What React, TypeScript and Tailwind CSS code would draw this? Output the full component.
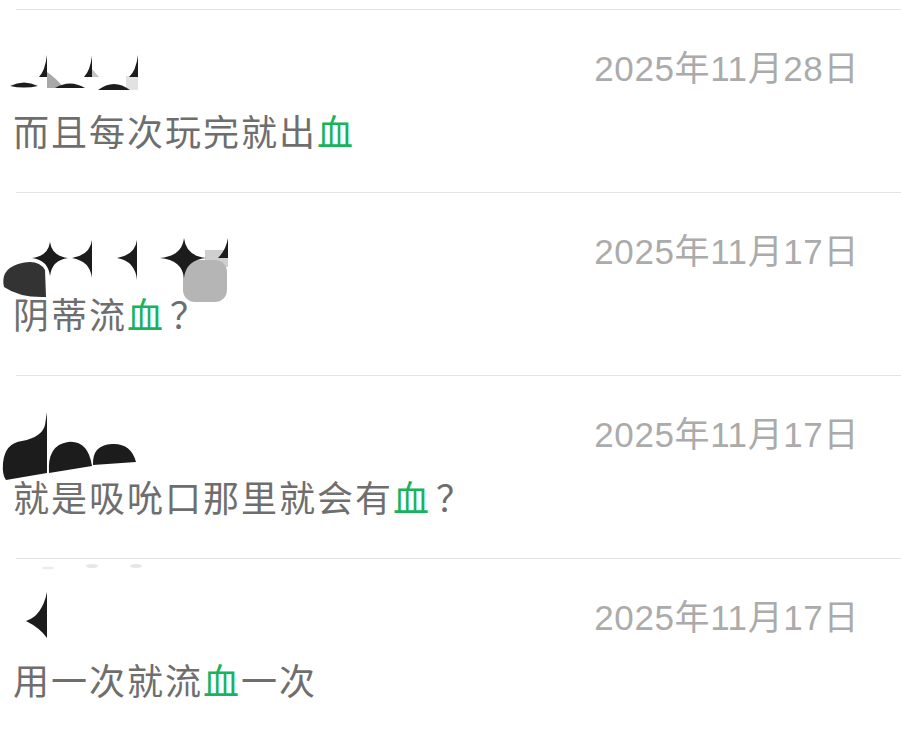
import type { ReactNode } from "react";

type Comment = {
  date: string;
  before: string;
  after: string;
  mark?: boolean;
  mask: ReactNode;
};

const dark = "#1c1c1c";

// redacted user names, drawn in row coordinates (y = 0 is the divider line)
const Mask1 = () => (
  <>
    <path d="M10 77 Q24 70 38 77 Q24 80 10 77 Z" fill={dark} />
    <path d="M47 63 L47 79 L64 79 Q56 69 47 63 Z" fill="#a8a8a8" />
    <path d="M39 68 L47 68 L47 46 Q45 62 39 68 Z" fill={dark} />
    <path d="M55 79 Q70 70 85 79 Z" fill={dark} />
    <path d="M92 60 L99 68 L92 68 Z" fill="#c4c4c4" />
    <path d="M84 68 L92 68 L92 47 Q90 62 84 68 Z" fill={dark} />
    <rect x="126" y="67" width="12" height="14" fill="#e2e2e2" />
    <path d="M98 81 Q114 69 130 81 Z" fill={dark} />
    <path d="M129 68 L138 68 L138 46 Q136 62 129 68 Z" fill={dark} />
  </>
);

const Mask2 = () => (
  <>
    <path d="M205 58 L228 58 L228 75 L205 75 Z" fill="#cfcfcf" />
    <rect x="183" y="68" width="44" height="42" rx="12" fill="#b5b5b5" />
    <path d="M228 46 L228 66 L218 66 Q226 58 228 46 Z" fill={dark} />
    <path d="M4 95 Q0 78 18 72 Q38 66 45 78 L46 105 Q20 106 4 95 Z" fill="#333333" />
    <path d="M50 50 Q52 64 68 66 Q52 68 50 84 Q48 68 32 66 Q48 64 50 50 Z" fill={dark} />
    <path d="M92 48 L92 86 Q90 69 72 66 Q90 63 92 48 Z" fill={dark} />
    <path d="M137 48 L137 88 Q135 69 117 66 Q135 63 137 48 Z" fill={dark} />
    <path d="M184 46 Q186 64 206 66 Q186 68 184 86 Q182 68 160 66 Q182 64 184 46 Z" fill={dark} />
  </>
);

const Mask3 = () => (
  <>
    <path d="M47 37 L47 98 L6 105 Q2 100 3 88 Q5 68 22 66 Q42 62 45 50 Z" fill={dark} />
    <path d="M49 98 Q47 70 68 67 Q88 65 92 91 Z" fill={dark} />
    <path d="M93 90 Q92 70 112 69 Q131 68 136 87 Z" fill={dark} />
  </>
);

const Mask4 = () => (
  <>
    <ellipse cx="48" cy="10" rx="6" ry="1.5" fill="#ececec" />
    <ellipse cx="92" cy="8" rx="6" ry="2" fill="#e6e6e6" />
    <ellipse cx="136" cy="8" rx="6" ry="2" fill="#e6e6e6" />
    <path d="M47 34 L47 80 Q40 70 26 63 Q42 58 47 34 Z" fill={dark} />
  </>
);

const comments: Comment[] = [
  { date: "2025年11月28日", before: "而且每次玩完就出", after: "", mask: <Mask1 /> },
  { date: "2025年11月17日", before: "阴蒂流", after: "", mark: true, mask: <Mask2 /> },
  { date: "2025年11月17日", before: "就是吸吮口那里就会有", after: "", mark: true, mask: <Mask3 /> },
  { date: "2025年11月17日", before: "用一次就流", after: "一次", mask: <Mask4 /> },
];

const CommentRow = ({ comment }: { comment: Comment }) => (
  <div>
    <div className="ml-4 h-px bg-[#e4e4e4]" />
    <div className="px-[13px] pr-[42px] pt-[41px] pb-[38px]">
      <div className="relative flex h-[36px] items-center justify-between">
        <svg
          className="absolute left-[-13px] top-[-42px] overflow-visible"
          width="240"
          height="183"
          viewBox="0 0 240 183"
        >
          {comment.mask}
        </svg>
        <span />
        <span className="text-[35px] leading-[36px] tracking-[0.6px] text-[#ababab] [font-family:'Liberation_Sans','Noto_Sans_CJK_SC',sans-serif]">
          {comment.date}
        </span>
      </div>
      <p className="mt-[19px] text-[36px] leading-[48px] tracking-[2px] text-[#6e6e6e] [font-family:'Noto_Sans_CJK_SC',sans-serif]">
        {comment.before}
        <span className="text-[#19b35b]">血</span>
        {comment.after}
        {comment.mark && <span className="ml-[5px]">？</span>}
      </p>
    </div>
  </div>
);

export default function App() {
  return (
    <div className="h-[736px] w-[901px] overflow-hidden bg-white pt-[9px]">
      {comments.map((c, i) => (
        <CommentRow key={i} comment={c} />
      ))}
    </div>
  );
}
